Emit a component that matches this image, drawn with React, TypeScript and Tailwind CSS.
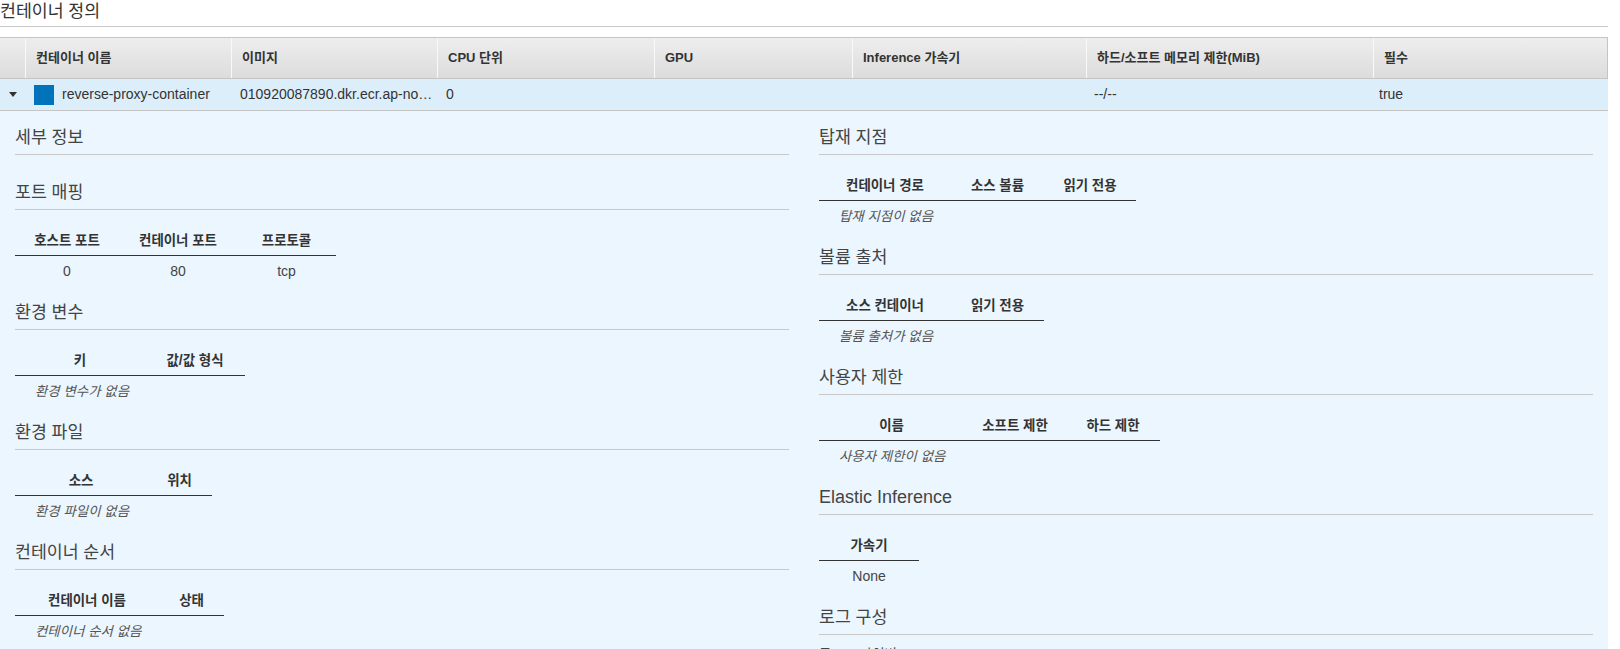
import React from "react";

// Hangul runs get a slightly smaller size so the fallback glyphs line up with the reference
const KO = /([\uAC00-\uD7A3\u3131-\u318E]+(?: [\uAC00-\uD7A3\u3131-\u318E]+)*)/;

function T({ children, full }: { children: string; full?: boolean }) {
  const parts = children.split(KO);
  return (
    <span>
      {parts.map((p, i) =>
        i % 2 === 1 ? (
          <span key={i} className={full ? "leading-none" : "text-[0.96em] leading-none"}>
            {p}
          </span>
        ) : (
          p
        )
      )}
    </span>
  );
}

type Col = { label: string; w: number };

function MiniTable({ cols, rows, empty }: { cols: Col[]; rows?: string[][]; empty?: string }) {
  return (
    <div className="mt-[16px] w-fit">
      <div className="flex border-b border-[#333]">
        {cols.map((c) => (
          <div
            key={c.label}
            style={{ width: c.w }}
            className="pt-[6px] pb-[6px] text-center text-[14px] leading-[17px] font-bold text-[#333]"
          >
            <T>{c.label}</T>
          </div>
        ))}
      </div>
      {rows ? (
        rows.map((r, i) => (
          <div key={i} className="flex">
            {r.map((v, j) => (
              <div key={j} style={{ width: cols[j].w }} className="py-[5px] text-center text-[14px] leading-[20px] text-[#444]">
                <T>{v}</T>
              </div>
            ))}
          </div>
        ))
      ) : (
        <div className="py-[5px] pl-[20px] text-[14px] leading-[20px] italic text-[#555]">
          <T>{empty || ""}</T>
        </div>
      )}
    </div>
  );
}

function Section({ title, children, empty }: { title: string; children?: React.ReactNode; empty?: boolean }) {
  return (
    <div className={empty ? "mb-[26px]" : "mb-[15px]"}>
      <h3 className="text-[18px] leading-[23px] pb-[5px] border-b border-[#c8c8c8] text-[#444]">
        <T>{title}</T>
      </h3>
      {children}
    </div>
  );
}

const headCols = [
  { label: "", w: "w-[25px]" },
  { label: "컨테이너 이름", w: "w-[206px]" },
  { label: "이미지", w: "w-[206px]" },
  { label: "CPU 단위", w: "w-[217px]" },
  { label: "GPU", w: "w-[198px]" },
  { label: "Inference 가속기", w: "w-[234px]" },
  { label: "하드/소프트 메모리 제한(MiB)", w: "w-[287px]" },
  { label: "필수", w: "flex-1" },
];

export default function App() {
  return (
    <div className="w-[1608px] bg-white font-['Liberation_Sans','Noto_Sans_CJK_KR',sans-serif] text-[#333]">
      <div className="text-[18px] leading-[22px] pb-[4px] border-b border-[#c8c8c8] text-[#333]">
        <T>컨테이너 정의</T>
      </div>

      {/* container table */}
      <div className="mt-[10px]">
        <div className="flex h-[42px] border-t border-b border-r border-[#c4c4c4] bg-gradient-to-b from-[#eeeeee] to-[#dcdcdc]">
          {headCols.map((c, i) => (
            <div
              key={i}
              className={`${c.w} ${i > 0 ? "border-l border-[#f9f9f9]" : ""} flex items-center pl-[10px] text-[13px] font-bold text-[#333]`}
            >
              <T full>{c.label}</T>
            </div>
          ))}
        </div>
        <div className="flex h-[32px] items-center border-b border-[#c4c4c4] bg-[#ddeefb] text-[14px] text-[#333]">
          <div className="w-[25px] flex justify-center">
            <svg width="8" height="5" viewBox="0 0 8 5">
              <polygon points="0,0 8,0 4,5" fill="#333" />
            </svg>
          </div>
          <div className="w-[207px] flex items-center gap-[8px] pl-[9px]">
            <div className="w-[20px] h-[20px] bg-[#0073bb]" />
            <span>reverse-proxy-container</span>
          </div>
          <div className="w-[206px] pl-[8px] pr-[3px] truncate">010920087890.dkr.ecr.ap-northeast-2.amazonaws.com/reverse-proxy:latest</div>
          <div className="w-[217px] pl-[8px]">0</div>
          <div className="w-[198px]"></div>
          <div className="w-[234px]"></div>
          <div className="w-[287px] pl-[7px]">--/--</div>
          <div className="flex-1 pl-[5px]">true</div>
        </div>
      </div>

      {/* expanded details */}
      <div className="bg-[#ebf6fe] px-[15px] pt-[15px] pb-[40px] grid grid-cols-2 gap-x-[30px]">
        <div>
          <Section title="세부 정보" empty />
          <Section title="포트 매핑">
            <MiniTable
              cols={[
                { label: "호스트 포트", w: 104 },
                { label: "컨테이너 포트", w: 118 },
                { label: "프로토콜", w: 99 },
              ]}
              rows={[["0", "80", "tcp"]]}
            />
          </Section>
          <Section title="환경 변수">
            <MiniTable
              cols={[
                { label: "키", w: 130 },
                { label: "값/값 형식", w: 100 },
              ]}
              empty="환경 변수가 없음"
            />
          </Section>
          <Section title="환경 파일">
            <MiniTable
              cols={[
                { label: "소스", w: 132 },
                { label: "위치", w: 65 },
              ]}
              empty="환경 파일이 없음"
            />
          </Section>
          <Section title="컨테이너 순서">
            <MiniTable
              cols={[
                { label: "컨테이너 이름", w: 144 },
                { label: "상태", w: 65 },
              ]}
              empty="컨테이너 순서 없음"
            />
          </Section>
          <Section title="네트워크 설정" />
        </div>
        <div>
          <Section title="탑재 지점">
            <MiniTable
              cols={[
                { label: "컨테이너 경로", w: 132 },
                { label: "소스 볼륨", w: 93 },
                { label: "읽기 전용", w: 92 },
              ]}
              empty="탑재 지점이 없음"
            />
          </Section>
          <Section title="볼륨 출처">
            <MiniTable
              cols={[
                { label: "소스 컨테이너", w: 132 },
                { label: "읽기 전용", w: 93 },
              ]}
              empty="볼륨 출처가 없음"
            />
          </Section>
          <Section title="사용자 제한">
            <MiniTable
              cols={[
                { label: "이름", w: 145 },
                { label: "소프트 제한", w: 102 },
                { label: "하드 제한", w: 94 },
              ]}
              empty="사용자 제한이 없음"
            />
          </Section>
          <Section title="Elastic Inference">
            <MiniTable cols={[{ label: "가속기", w: 100 }]} rows={[["None"]]} />
          </Section>
          <Section title="로그 구성">
            <div className="mt-[9px] text-[14px] leading-[20px] text-[#444]">
              <T>로그 드라이버:</T>
            </div>
            <div className="text-[14px] leading-[20px] text-[#444]">awslogs</div>
          </Section>
        </div>
      </div>
    </div>
  );
}
